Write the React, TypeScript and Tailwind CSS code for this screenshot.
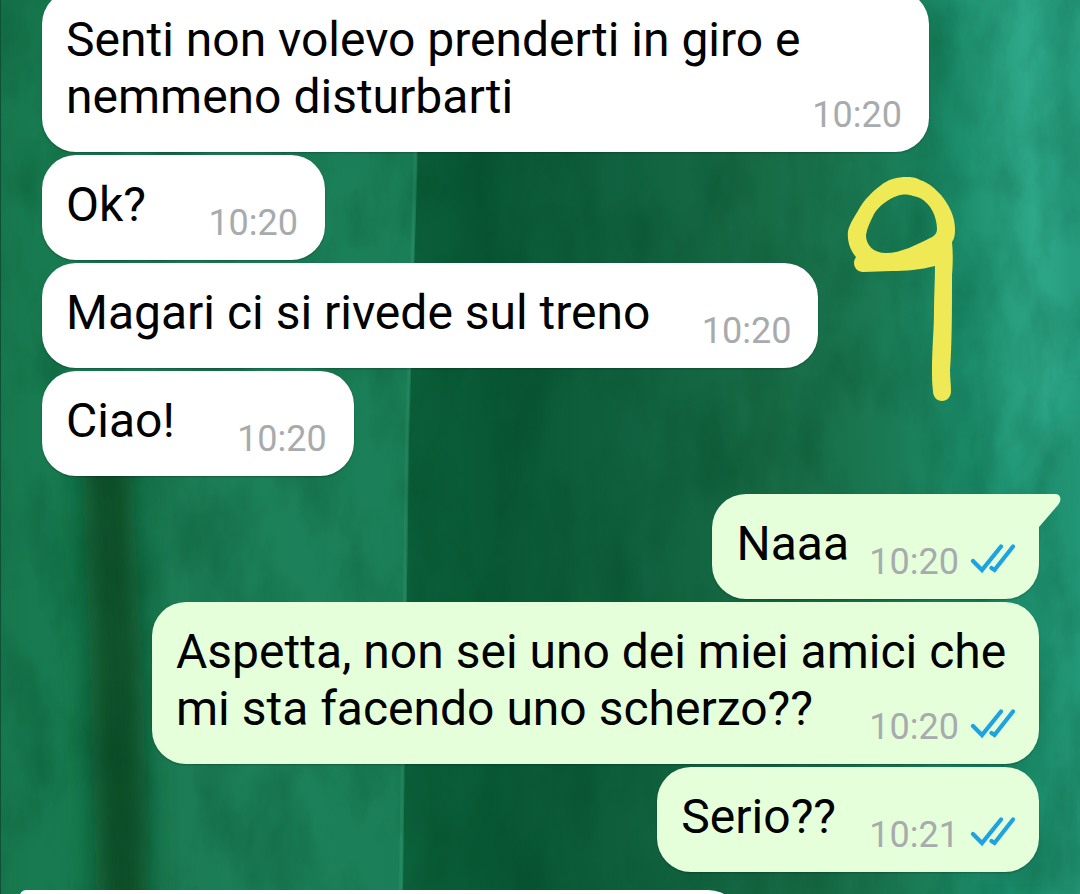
import { clsx } from 'clsx';

interface Message {
  id: number;
  lines: string[];
  time: string;
  outgoing?: boolean;
  tail?: boolean;
  // room kept free on the right of the text for the time
  space: string;
}

const messages: Message[] = [
  { id: 1, lines: ['Senti non volevo prenderti in giro e', 'nemmeno disturbarti'], time: '10:20', space: 'pr-6' },
  { id: 2, lines: ['Ok?'], time: '10:20', space: 'pr-[179px]' },
  { id: 3, lines: ['Magari ci si rivede sul treno'], time: '10:20', space: 'pr-[168px]' },
  { id: 4, lines: ['Ciao!'], time: '10:20', space: 'pr-[179px]' },
  { id: 5, lines: ['Naaa'], time: '10:20', outgoing: true, tail: true, space: 'pr-[190px]' },
  {
    id: 6,
    lines: ['Aspetta, non sei uno dei miei amici che', 'mi sta facendo uno scherzo??'],
    time: '10:20',
    outgoing: true,
    space: 'pr-6',
  },
  { id: 7, lines: ['Serio??'], time: '10:21', outgoing: true, space: 'pr-[203px]' },
];

export default function App() {
  return (
    <main className="relative isolate h-screen overflow-hidden bg-[#0d5f3a] font-[Roboto,sans-serif] text-black">
      <Wallpaper />

      <ol className="-mt-[10px] flex flex-col gap-[3px] pr-[41px] pl-[42px]">
        {messages.map((message) => (
          <Bubble key={message.id} message={message} />
        ))}
      </ol>

      {/* Top edge of the next incoming message */}
      <div className="mt-[18px] ml-5 h-12 w-[722px] rounded-tl-md rounded-tr-[34px] bg-white" />

      <Scribble />
    </main>
  );
}

function Bubble({ message }: { message: Message }) {
  const { lines, time, outgoing, tail, space } = message;

  return (
    <li
      className={clsx(
        'relative grid rounded-[34px] shadow-[0_1px_2px_rgba(0,0,0,0.25)]',
        outgoing ? 'self-end bg-[#e5ffdb]' : 'self-start bg-white',
        lines.length > 1 && 'w-full max-w-[887px]',
        tail && 'mt-[15px] rounded-tr-none'
      )}
    >
      <p className={clsx('col-start-1 row-start-1 pt-[21px] pb-[27px] pl-6 text-[48px] leading-[57px]', space)}>
        {lines.map((line) => (
          <span key={line} className="block">
            {line}
          </span>
        ))}
      </p>
      <div
        className={clsx(
          'col-start-1 row-start-1 flex items-center gap-[11px] self-end justify-self-end pb-4',
          outgoing ? 'pr-6' : 'pr-[27px]'
        )}
      >
        <time className="text-[36px] leading-[42px] text-[#a8abad]">{time}</time>
        {outgoing && <ReadTicks />}
      </div>
      {tail && (
        <svg className="absolute top-0 left-full h-[34px] w-[22px]" viewBox="0 0 22 34" fill="#e5ffdb" aria-hidden="true">
          <path d="M-1 0H16Q21 0 21.500 5Q21.500 8 19 11L0 33H-1Z" />
        </svg>
      )}
    </li>
  );
}

function ReadTicks() {
  return (
    <svg
      className="h-9 w-[45px]"
      viewBox="0 0 45 36"
      fill="none"
      stroke="#1fa3e0"
      strokeWidth="4.2"
      strokeLinecap="round"
      strokeLinejoin="miter"
      role="img"
      aria-label="Letto"
    >
      <path d="M3 17L12 26L31 2.500" />
      <path d="M21.500 24L24.500 26L43 2.500" />
    </svg>
  );
}

// Hand drawn number over the chat
function Scribble() {
  return (
    <svg
      className="absolute top-[172px] right-[121px] h-[232px] w-[116px]"
      viewBox="843 172 116 232"
      fill="#efe955"
      aria-hidden="true"
    >
      <path
        fillRule="evenodd"
        d="M907 177C914 177 917 178 920 180C930 183 936 190 941 195C949 205 955 216 955 229C955 236 954 239 952 242C953 252 953 262 952 275C952 310 952 345 950 370C950 378 951 385 951 391C951 397 947 401 942 401C937 401 933 397 933 391C932 384 932 377 932 370C932 348 934 330 934 310C934 295 935 280 935 266C920 270 905 271 892 271L863 272C858 272 854 268 854 263C854 260 855 259 856 257C850 250 847 241 848 231C850 223 855 216 859 209C864 200 872 192 880 186C888 179 897 177 907 177Z
        M897 196C888 199 879 206 874 214C870 222 867 228 866 235C866 245 873 253 886 253C901 253 916 245 930 238C935 236 937 233 937 229C937 216 930 203 920 198C917 197 915 196 913 196C908 194 902 194 897 196Z"
      />
    </svg>
  );
}

// Green curtain with soft folds
function Wallpaper() {
  return (
    <svg
      className="absolute inset-0 -z-10 h-full w-full"
      viewBox="0 0 1080 894"
      preserveAspectRatio="none"
      aria-hidden="true"
    >
      <defs>
        <linearGradient id="left">
          <stop offset="0" stopColor="#17784e" />
          <stop offset="0.15" stopColor="#177b51" />
          <stop offset="0.4" stopColor="#1b7b54" />
          <stop offset="0.7" stopColor="#1c815a" />
          <stop offset="1" stopColor="#1a7f58" />
        </linearGradient>
        <linearGradient id="right" gradientUnits="userSpaceOnUse" x1="400" x2="1080" y1="450" y2="410">
          <stop offset="0" stopColor="#0b613b" />
          <stop offset="0.14" stopColor="#095735" />
          <stop offset="0.35" stopColor="#116240" />
          <stop offset="0.55" stopColor="#176b45" />
          <stop offset="0.7" stopColor="#1a7852" />
          <stop offset="0.84" stopColor="#1c8d6b" />
          <stop offset="0.95" stopColor="#2ea889" />
          <stop offset="1" stopColor="#279d7f" />
        </linearGradient>
        <filter id="soft" x="-100%" width="300%">
          <feGaussianBlur stdDeviation="15" />
        </filter>
        <filter id="cloth" x="0" y="0" width="100%" height="100%" colorInterpolationFilters="sRGB">
          <feTurbulence type="fractalNoise" baseFrequency="0.02 0.01" numOctaves="5" seed="4" />
          <feColorMatrix values="0 0 0 0 0  0 0 0 0 0.25  0 0 0 0 0.12  1.6 0 0 0 -0.6" />
        </filter>
      </defs>
      <rect width="1080" height="894" fill="url(#right)" />
      <path d="M960 894L1010 500L1080 400V894Z" fill="#178260" opacity="0.6" filter="url(#soft)" />
      <path d="M0 0H420L416 180L408 440L402 894H0Z" fill="url(#left)" />
      <path d="M418 0L415 180L407 440L401 894" fill="none" stroke="#2c8d68" strokeWidth="4" opacity="0.6" />
      <path d="M80 400H128L142 660L150 940H98L90 660Z" fill="#0c4a22" opacity="0.9" filter="url(#soft)" />
      <rect width="1080" height="894" filter="url(#cloth)" opacity="0.35" />
      <path d="M0.500 0V894" stroke="#0d5236" />
    </svg>
  );
}
